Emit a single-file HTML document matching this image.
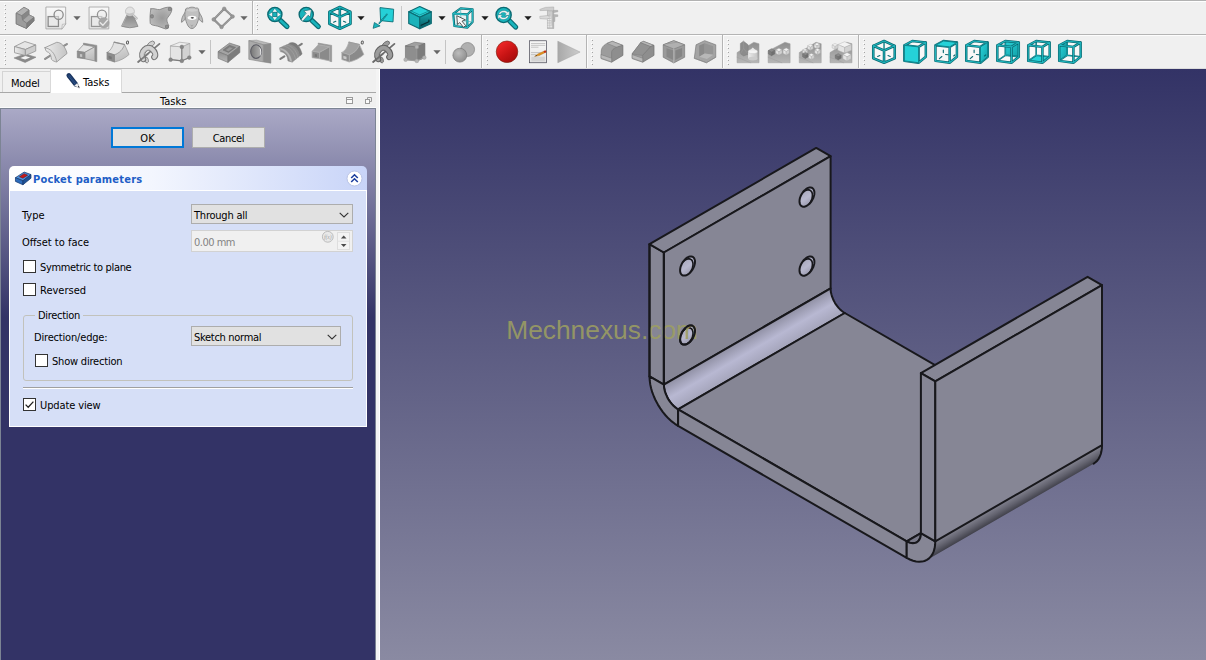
<!DOCTYPE html>
<html><head><meta charset="utf-8"><title>FreeCAD</title>
<style>
*{box-sizing:border-box;margin:0;padding:0}
html,body{width:1206px;height:660px;overflow:hidden;background:#f0f0f0}
body{position:relative;font-family:"DejaVu Sans Condensed","Liberation Sans",sans-serif;font-size:11px;color:#000}
.abs{position:absolute}
#topline{left:0;top:0;width:1206px;height:1px;background:#b2b2b2}
#topline2{left:0;top:1px;width:1206px;height:1px;background:#fff}
.hsep{left:0;width:1206px;height:1px;background:#b4b4b4}
.hsepw{left:0;width:1206px;height:1px;background:#fdfdfd}
.tb{position:absolute;left:0;width:1206px;height:32px}
.tb svg{position:absolute;overflow:visible}
.handle{position:absolute;width:2px;height:27px;background-image:repeating-linear-gradient(to bottom,#fff 0,#fff 1px,transparent 1px,transparent 4px),repeating-linear-gradient(to bottom,transparent 0,transparent 1px,#a4a4a4 1px,#a4a4a4 2px,transparent 2px,transparent 4px);background-size:1px 100%,1px 100%;background-position:0 0,1px 0;background-repeat:no-repeat}
.vsep{position:absolute;width:1px;background:#bdbdbd}
.vsepw{position:absolute;width:1px;background:#fff}
.dd{position:absolute;width:0;height:0;border-left:4px solid transparent;border-right:4px solid transparent;border-top:4px solid #8a8a8a}
.dd.k{border-top-color:#1a1a1a}
#view{left:380px;top:69px;width:826px;height:591px;background:linear-gradient(#333366,#8a8aa2)}
#view svg{position:absolute;left:0;top:0}
#split{left:376px;top:69px;width:4px;height:591px;background:linear-gradient(90deg,#f4f4f4 0,#f4f4f4 3px,#fff 3px)}
#tabs{left:0;top:69px;width:376px;height:24px}
#tabline{left:0;top:92px;width:376px;height:1px;background:#a8a8a8}
#tabM{left:2px;top:71px;width:49px;height:21px;border:1px solid #d4d4d4;border-bottom:none;background:#f0f0f0}
#tabT{left:50px;top:69px;width:72px;height:24px;background:#fff;border:1px solid #d9d9d9;border-bottom:none}
.txt{position:absolute;white-space:nowrap;line-height:14px}
#panel{left:0;top:108px;width:376px;height:552px;background:linear-gradient(#aaa9c6 0px,#333366 208px,#333366 100%);border:1px solid #7c8494;border-bottom:none}
#pwl{left:0;top:107px;width:376px;height:1px;background:#fbfbfb}
.btn{position:absolute;height:21px;width:73px;background:#e1e1e1;border:1px solid #adadad;text-align:center;line-height:19px}
#ok{border:2px solid #0078d7;line-height:17px}
#boxh{left:9px;top:166px;width:358px;height:25px;border-radius:5px 5px 0 0;background:linear-gradient(90deg,#ffffff 0%,#f3f6fe 40%,#c8d4f8 100%);}
#boxb{left:9px;top:190px;width:358px;height:237px;background:#d6dff7;border:1px solid #fff;border-top:1px solid #fff}
.combo{position:absolute;height:20px;background:#e1e1e1;border:1px solid #adadad;line-height:18px;padding-left:2px;padding-top:1.5px}
.cb{position:absolute;width:13px;height:13px;background:#fff;border:1px solid #333}
.lbl{position:absolute;white-space:nowrap;line-height:14px}
</style></head>
<body>
<div class="abs" id="topline"></div><div class="abs" id="topline2"></div>
<div class="tb" style="top:2px"><svg width="1206" height="32" viewBox="0 0 1206 32" style="left:0;top:0"><defs>
<linearGradient id="gA" x1="0" y1="0" x2="0" y2="1"><stop offset="0" stop-color="#f9f9f9"/><stop offset="1" stop-color="#e4e4e4"/></linearGradient>
<linearGradient id="gB" x1="0" y1="0" x2="1" y2="1"><stop offset="0" stop-color="#b4b4b4"/><stop offset="1" stop-color="#8c8c8c"/></linearGradient>
<linearGradient id="gC" x1="0" y1="0" x2="1" y2="0"><stop offset="0" stop-color="#ececec"/><stop offset="1" stop-color="#c4c4c4"/></linearGradient>
<linearGradient id="gD" x1="0" y1="0" x2="0" y2="1"><stop offset="0" stop-color="#8e8e8e"/><stop offset="1" stop-color="#b6b6b6"/></linearGradient>
<linearGradient id="gR" x1="0.2" y1="0.1" x2="0.8" y2="0.9"><stop offset="0" stop-color="#ee2626"/><stop offset="0.55" stop-color="#c81414"/><stop offset="1" stop-color="#a80c0c"/></linearGradient>
<linearGradient id="gT" x1="0" y1="0" x2="1" y2="1"><stop offset="0" stop-color="#2ad4da"/><stop offset="1" stop-color="#12a0a8"/></linearGradient>
<linearGradient id="gT2" x1="0" y1="0" x2="0" y2="1"><stop offset="0" stop-color="#18aab2"/><stop offset="1" stop-color="#0a5860"/></linearGradient>
<linearGradient id="gP" x1="0" y1="0" x2="1" y2="0"><stop offset="0" stop-color="#a8a8a8"/><stop offset="1" stop-color="#cdcdcd"/></linearGradient>
<linearGradient id="gH" x1="0" y1="0" x2="1" y2="0"><stop offset="0" stop-color="#767676"/><stop offset="1" stop-color="#b4b4b4"/></linearGradient>
<linearGradient id="gD2" x1="0" y1="0" x2="0" y2="1"><stop offset="0" stop-color="#848484"/><stop offset="1" stop-color="#b0b0b0"/></linearGradient>
<linearGradient id="gL" x1="0" y1="0" x2="0.3" y2="1"><stop offset="0" stop-color="#dedede"/><stop offset="1" stop-color="#bcbcbc"/></linearGradient>
<radialGradient id="gS" cx="0.4" cy="0.35" r="0.7"><stop offset="0" stop-color="#bcbcbc"/><stop offset="1" stop-color="#8c8c8c"/></radialGradient>
<radialGradient id="gS2" cx="0.55" cy="0.5" r="0.6"><stop offset="0" stop-color="#9a9a9a"/><stop offset="1" stop-color="#bcbcbc"/></radialGradient>
</defs><g transform="translate(8,0) scale(0.09121)"><polygon points="175,58 230,88 230,140 285,168 285,205 203,290 90,240 90,122" fill="#9a9a9a" stroke="#747474" stroke-width="9" stroke-linejoin="round" /><polygon points="175,58 230,88 150,150 90,122" fill="#b2b2b2" stroke="#7c7c7c" stroke-width="6" stroke-linejoin="round" /><polygon points="150,150 230,88 230,140 160,200" fill="#868686" stroke="#7c7c7c" stroke-width="5" stroke-linejoin="round" /><polygon points="160,200 230,140 285,168 205,232" fill="#a8a8a8" stroke="#7c7c7c" stroke-width="5" stroke-linejoin="round" /><polygon points="205,232 285,168 285,205 203,290" fill="#7e7e7e" stroke="#747474" stroke-width="5" stroke-linejoin="round" /><polygon points="90,122 150,150 160,200 205,232 203,290 90,240" fill="#9c9c9c" stroke="#747474" stroke-width="6" stroke-linejoin="round" /><path d="M420,55 H632 V240 L590,295 H420 Z" fill="url(#gA)" stroke="#a2a2a2" stroke-width="9" stroke-linejoin="round" stroke-linecap="round" /><path d="M590,295 L595,245 L632,240 Z" fill="#e8e8e8" stroke="#a4a4a4" stroke-width="6" stroke-linejoin="round" stroke-linecap="round" /><rect x="440" y="160" width="113" height="108" fill="#e9e9e9" stroke="#8a8a8a" stroke-width="14"/><circle cx="555" cy="140" r="50" fill="#ececec" stroke="#8a8a8a" stroke-width="14" fill-opacity="0.55"/><path d="M893,55 H1105 V295 H893 Z" fill="url(#gA)" stroke="#a2a2a2" stroke-width="9" stroke-linejoin="round" stroke-linecap="round" /><rect x="915" y="160" width="113" height="108" fill="#e9e9e9" stroke="#949494" stroke-width="14"/><circle cx="1030" cy="140" r="50" fill="#ececec" stroke="#949494" stroke-width="14" fill-opacity="0.55"/><circle cx="1052" cy="228" r="58" fill="#a6a6a6" stroke="#989898" stroke-width="4" /><path d="M1012,228 L1040,256 L1092,198" fill="none" stroke="#e8e8e8" stroke-width="15" stroke-linejoin="round" stroke-linecap="round" /></g><g transform="translate(118,2) scale(0.07463)"><path d="M128,140 L198,140 L268,300 Q160,338 52,300 Z" fill="url(#gD2)" stroke="#868686" stroke-width="11" stroke-linejoin="round" stroke-linecap="round" /><path d="M205,150 L248,193" fill="none" stroke="#a8a8a8" stroke-width="30" stroke-linejoin="round" stroke-linecap="round" /><path d="M205,150 L248,193" fill="none" stroke="#d8d8d8" stroke-width="16" stroke-linejoin="round" stroke-linecap="round" /><circle cx="160" cy="100" r="60" fill="#e2e2e2" stroke="#b4b4b4" stroke-width="9" /><path d="M110,115 A52,52 0 0 0 212,112 Q160,140 110,115 Z" fill="#c4c4c4" stroke="none" stroke-width="0" stroke-linejoin="round" stroke-linecap="round" /><path d="M440,65 C480,50 520,80 560,75 C600,60 640,40 700,42 L722,60 C725,110 690,150 660,190 C645,215 665,260 680,290 L670,325 L640,335 C590,320 540,295 500,290 C470,285 445,280 432,260 C425,200 430,120 440,65 Z" fill="url(#gS2)" stroke="#868686" stroke-width="12" stroke-linejoin="round" stroke-linecap="round" /><rect x="675" y="48" width="40" height="40" rx="8" fill="#8e8e8e" stroke="#787878" stroke-width="10"/><rect x="436" y="143" width="38" height="44" rx="14" fill="#8e8e8e" stroke="#787878" stroke-width="10"/><rect x="636" y="285" width="40" height="40" rx="8" fill="#8e8e8e" stroke="#787878" stroke-width="10"/><path d="M900,110 C870,150 845,200 850,245 C880,235 905,200 915,160 Z" fill="#bebebe" stroke="#848484" stroke-width="11" stroke-linejoin="round" stroke-linecap="round" /><path d="M1085,110 C1115,150 1140,200 1135,245 C1105,235 1080,200 1070,160 Z" fill="#bebebe" stroke="#848484" stroke-width="11" stroke-linejoin="round" stroke-linecap="round" /><path d="M905,80 C900,55 930,50 945,55 C960,38 1025,38 1040,55 C1060,48 1088,58 1080,80 C1100,130 1085,200 1060,260 C1040,310 1010,330 990,330 C970,330 940,310 922,260 C900,200 885,130 905,80 Z" fill="#c0c0c0" stroke="#848484" stroke-width="11" stroke-linejoin="round" stroke-linecap="round" /><path d="M915,85 C940,60 1045,60 1070,85 C1050,110 935,110 915,85 Z" fill="#cecece" stroke="none" stroke-width="0" stroke-linejoin="round" stroke-linecap="round" /><ellipse cx="992" cy="185" rx="60" ry="29" fill="#fafafa" stroke="none" stroke-width="0" /><ellipse cx="996" cy="185" rx="22" ry="11" fill="#484848" stroke="none" stroke-width="0" /><path d="M975,285 Q990,298 1005,285 M990,297 L990,318" fill="none" stroke="#8a8a8a" stroke-width="6" stroke-linejoin="round" stroke-linecap="round" /></g><g transform="translate(113,0) scale(0.11609)"><polygon points="958,58 1030,125 935,215 868,150" fill="none" stroke="#8a8a8a" stroke-width="19" stroke-linejoin="round" /><polygon points="958,58 1030,125 935,215 868,150" fill="none" stroke="#a8a8a8" stroke-width="6" stroke-linejoin="round" /><circle cx="958" cy="58" r="16" fill="#969696" stroke="#848484" stroke-width="4" /><circle cx="1030" cy="125" r="16" fill="#969696" stroke="#848484" stroke-width="4" /><circle cx="935" cy="215" r="16" fill="#969696" stroke="#848484" stroke-width="4" /><circle cx="868" cy="150" r="16" fill="#969696" stroke="#848484" stroke-width="4" /></g><g transform="translate(250,0) scale(0.12438)"><path d="M245,148 L298,198" fill="none" stroke="#0b6a72" stroke-width="40" stroke-linejoin="round" stroke-linecap="round" /><path d="M245,148 L298,198" fill="none" stroke="#19b4bc" stroke-width="22" stroke-linejoin="round" stroke-linecap="round" /><circle cx="200" cy="100" r="57" fill="#19b4bc" stroke="#0b6a72" stroke-width="11" /><path d="M200,52 L222,82 L178,82 Z M200,148 L222,118 L178,118 Z M152,100 L182,78 L182,122 Z M248,100 L218,78 L218,122 Z" fill="#f2f2f2" stroke="#0d7880" stroke-width="3" stroke-linejoin="round" stroke-linecap="round" /><rect x="184" y="84" width="32" height="32" fill="#19b4bc" stroke="#0b6a72" stroke-width="4"/><path d="M497,148 L550,198" fill="none" stroke="#0b6a72" stroke-width="40" stroke-linejoin="round" stroke-linecap="round" /><path d="M497,148 L550,198" fill="none" stroke="#19b4bc" stroke-width="22" stroke-linejoin="round" stroke-linecap="round" /><circle cx="452" cy="100" r="57" fill="#19b4bc" stroke="#0b6a72" stroke-width="11" /><path d="M412,142 L424,154 L468,106 L484,122 L494,60 L432,72 L450,88 Z" fill="#f2f2f2" stroke="#0d6068" stroke-width="5" stroke-linejoin="round" stroke-linecap="round" /><polygon points="722,40 808,80 808,175 722,215 638,175 638,80" fill="#f6f6f6" stroke="none" stroke-width="0" stroke-linejoin="round" /><path d="M722,40 L808,80 L808,175 L722,215 L638,175 L638,80 Z M638,80 L722,120 L808,80 M722,120 L722,215 M722,40 L722,120" fill="none" stroke="#0b6a72" stroke-width="21" stroke-linejoin="round" stroke-linecap="round" /><path d="M722,40 L808,80 L808,175 L722,215 L638,175 L638,80 Z M638,80 L722,120 L808,80 M722,120 L722,215 M722,40 L722,120" fill="none" stroke="#19b4bc" stroke-width="9" stroke-linejoin="round" stroke-linecap="round" /><path d="M672,163 L690,155 M752,155 L770,163" fill="none" stroke="#0b6a72" stroke-width="9" stroke-linejoin="round" stroke-linecap="round" /><polygon points="1045,45 1155,58 1150,160 1050,150" fill="#25d0d7" stroke="#0b6a72" stroke-width="7" stroke-linejoin="round" /><path d="M1100,100 L1040,170" fill="none" stroke="#0b6a72" stroke-width="13" stroke-linejoin="round" stroke-linecap="round" stroke-dasharray="14 9"/><path d="M1100,100 L1040,170" fill="none" stroke="#27d2d8" stroke-width="5" stroke-linejoin="round" stroke-linecap="round" stroke-dasharray="14 9"/><polygon points="990,212 1000,165 1046,192" fill="#19b4bc" stroke="#0b6a72" stroke-width="6" stroke-linejoin="round" /></g><g transform="translate(400,0) scale(0.14096)"><polygon points="140,32 222,70 140,108 62,70" fill="#27d2d8" stroke="#0b6a72" stroke-width="8" stroke-linejoin="round" /><polygon points="62,70 140,108 140,190 62,152" fill="#1bb2ba" stroke="#0b6a72" stroke-width="8" stroke-linejoin="round" /><polygon points="140,108 222,70 222,152 140,190" fill="url(#gT2)" stroke="#0b6a72" stroke-width="8" stroke-linejoin="round" /><path d="M75,62 L140,92 L210,62" fill="none" stroke="#0e8088" stroke-width="5" stroke-linejoin="round" stroke-linecap="round" /><path d="M150,165 L205,140 L205,128" fill="none" stroke="#062e34" stroke-width="9" stroke-linejoin="round" stroke-linecap="round" /><polygon points="378,82 430,45 515,52 478,88" fill="#f4f4f4" stroke="none" stroke-width="0" stroke-linejoin="round" /><polygon points="378,82 478,88 478,182 385,170" fill="#e4f2f3" stroke="none" stroke-width="0" stroke-linejoin="round" /><polygon points="478,88 515,52 515,142 478,182" fill="#eef6f6" stroke="none" stroke-width="0" stroke-linejoin="round" /><path d="M378,82 L430,45 L515,52 L478,88 Z M378,82 L478,88 L478,182 L385,170 Z M478,88 L515,52 L515,142 L478,182" fill="none" stroke="#0b6a72" stroke-width="15" stroke-linejoin="round" stroke-linecap="round" /><path d="M378,82 L430,45 L515,52 L478,88 Z M378,82 L478,88 L478,182 L385,170 Z M478,88 L515,52 L515,142 L478,182" fill="none" stroke="#25bcc4" stroke-width="7" stroke-linejoin="round" stroke-linecap="round" /><path d="M430,45 L432,130 M432,130 L385,170 M432,130 L515,142" fill="none" stroke="#3ab6bc" stroke-width="5" stroke-linejoin="round" stroke-linecap="round" /><path d="M403,100 L408,160 L424,146 L450,180 L466,168 L440,136 L462,128 Z" fill="#f8f8f8" stroke="#3c3c3c" stroke-width="6" stroke-linejoin="round" stroke-linecap="round" /><path d="M778,135 L820,178" fill="none" stroke="#0b6a72" stroke-width="36" stroke-linejoin="round" stroke-linecap="round" /><path d="M778,135 L820,178" fill="none" stroke="#19b4bc" stroke-width="20" stroke-linejoin="round" stroke-linecap="round" /><circle cx="735" cy="92" r="54" fill="#19b4bc" stroke="#0b6a72" stroke-width="10" /><path d="M700,85 C705,60 745,50 765,72 L775,62 L775,95 L742,95 L754,83 C740,68 715,72 712,88 Z" fill="#f2f2f2" stroke="#0d7880" stroke-width="3" stroke-linejoin="round" stroke-linecap="round" /><path d="M770,100 C765,125 725,135 705,112 L695,122 L695,90 L728,90 L716,102 C730,116 755,112 758,97 Z" fill="#f2f2f2" stroke="#0d7880" stroke-width="3" stroke-linejoin="round" stroke-linecap="round" /></g><g transform="translate(534,2) scale(0.04243)"><rect x="312" y="160" width="156" height="420" fill="#cccccc" stroke="#a4a4a4" stroke-width="12"/><rect x="430" y="165" width="36" height="410" fill="#b4b4b4"/><path d="M145,125 L270,80 L465,70 L465,160 L350,160 L340,150 L150,155 Z" fill="#cecece" stroke="#a2a2a2" stroke-width="12" stroke-linejoin="round" stroke-linecap="round" /><path d="M145,290 L340,270 L340,345 L300,355 L150,345 Z" fill="#dadada" stroke="#a6a6a6" stroke-width="12" stroke-linejoin="round" stroke-linecap="round" /><path d="M465,150 L560,150 L565,182 L465,202 Z M465,250 L560,255 L565,292 L492,302 L492,410 L465,415 Z" fill="#b6b6b6" stroke="#a0a0a0" stroke-width="10" stroke-linejoin="round" stroke-linecap="round" /><path d="M330,310 h60 M330,365 h70 M330,420 h60 M330,475 h70 M330,525 h90" fill="none" stroke="#eeeeee" stroke-width="22" stroke-linejoin="round" stroke-linecap="round" /><path d="M370,250 v300" fill="none" stroke="#b0b0b0" stroke-width="10" stroke-linejoin="round" stroke-linecap="round" /></g></svg><div class="handle" style="left:4px;top:2px"></div><svg width="8" height="5" viewBox="0 0 8 5" style="left:73.4px;top:13.9px"><polygon points="0.4,0.3 7.6,0.3 4,4.3" fill="#666666"/></svg><svg width="8" height="5" viewBox="0 0 8 5" style="left:240.4px;top:13.9px"><polygon points="0.4,0.3 7.6,0.3 4,4.3" fill="#666666"/></svg><div class="vsep" style="left:252px;top:-1px;height:33px;background:#b4b4b4"></div><div class="vsep" style="left:253px;top:-1px;height:33px;background:#fbfbfb"></div><div class="handle" style="left:256px;top:2px"></div><svg width="8" height="5" viewBox="0 0 8 5" style="left:357.4px;top:13.8px"><polygon points="0.4,0.3 7.6,0.3 4,4.3" fill="#1c1c1c"/></svg><div class="vsep" style="left:401px;top:4px;height:24px;background:#c9c9c9"></div><svg width="8" height="5" viewBox="0 0 8 5" style="left:437.5px;top:13.8px"><polygon points="0.4,0.3 7.6,0.3 4,4.3" fill="#1c1c1c"/></svg><svg width="8" height="5" viewBox="0 0 8 5" style="left:480.6px;top:13.8px"><polygon points="0.4,0.3 7.6,0.3 4,4.3" fill="#1c1c1c"/></svg><svg width="8" height="5" viewBox="0 0 8 5" style="left:523.7px;top:13.8px"><polygon points="0.4,0.3 7.6,0.3 4,4.3" fill="#1c1c1c"/></svg></div>
<div class="abs hsep" style="top:34px"></div><div class="abs hsepw" style="top:35px"></div>
<div class="tb" style="top:36px"><svg width="1206" height="32" viewBox="0 0 1206 32" style="left:0;top:0"><g transform="translate(8,0) scale(0.10365)"></g><g transform="translate(10,1) scale(0.05308)"><polygon points="75,395 285,320 490,380 285,480" fill="#8a8a8a" stroke="#7e7e7e" stroke-width="10" stroke-linejoin="round" /><polygon points="195,395 290,360 380,385 285,425" fill="#f4f4f4" stroke="none" stroke-width="0" stroke-linejoin="round" /><polygon points="85,180 280,85 485,150 290,235" fill="#e6e6e6" stroke="#969696" stroke-width="16" stroke-linejoin="round" /><polygon points="85,180 290,235 290,350 85,295" fill="url(#gC)" stroke="#969696" stroke-width="16" stroke-linejoin="round" /><polygon points="290,235 485,150 485,265 290,350" fill="#cdcdcd" stroke="#969696" stroke-width="16" stroke-linejoin="round" /><path d="M1015,165 L1072,132" fill="none" stroke="#828282" stroke-width="38" stroke-linejoin="round" stroke-linecap="round" /><path d="M1015,165 L1072,132" fill="none" stroke="#a4a4a4" stroke-width="12" stroke-linejoin="round" stroke-linecap="round" /><path d="M662,412 L752,355" fill="none" stroke="#828282" stroke-width="38" stroke-linejoin="round" stroke-linecap="round" /><path d="M662,412 L752,355" fill="none" stroke="#a4a4a4" stroke-width="12" stroke-linejoin="round" stroke-linecap="round" /><path d="M660,200 L880,100 C960,100 1040,170 1075,310 L880,470 C860,470 800,450 780,420 C775,340 740,280 700,280 C680,270 665,240 660,200 Z" fill="url(#gC)" stroke="#969696" stroke-width="16" stroke-linejoin="round" stroke-linecap="round" /><path d="M665,205 C760,215 850,300 880,465" fill="none" stroke="#969696" stroke-width="14" stroke-linejoin="round" stroke-linecap="round" /></g><g transform="translate(72,1) scale(0.05308)"><polygon points="215,115 468,158 468,465 430,455 430,185 215,145" fill="#8e8e8e" stroke="#888888" stroke-width="10" stroke-linejoin="round" /><polygon points="100,270 215,145 430,185 240,290" fill="#e4e4e4" stroke="#8a8a8a" stroke-width="14" stroke-linejoin="round" /><polygon points="240,290 430,185 430,450 240,410" fill="url(#gL)" stroke="#8a8a8a" stroke-width="14" stroke-linejoin="round" /><polygon points="100,270 240,290 240,410 100,390" fill="#8e8e8e" stroke="#868686" stroke-width="14" stroke-linejoin="round" /><polygon points="150,318 192,324 192,378 150,372" fill="#c4c4c4" stroke="none" stroke-width="0" stroke-linejoin="round" /><path d="M800,335 C900,300 960,230 990,140 L1075,330 C1000,400 900,450 800,470 Z" fill="url(#gL)" stroke="#989898" stroke-width="14" stroke-linejoin="round" stroke-linecap="round" /><path d="M660,290 C720,270 770,180 790,95 L990,140 C960,230 900,300 800,335 Z" fill="#e2e2e2" stroke="#989898" stroke-width="14" stroke-linejoin="round" stroke-linecap="round" /><polygon points="790,85 995,130 990,152 785,107" fill="#8e8e8e" stroke="none" stroke-width="0" stroke-linejoin="round" /><polygon points="660,290 800,335 800,470 660,425" fill="#8c8c8c" stroke="#848484" stroke-width="14" stroke-linejoin="round" /><polygon points="688,352 748,370 748,422 688,404" fill="#767676" stroke="none" stroke-width="0" stroke-linejoin="round" /><ellipse cx="1045" cy="105" rx="20" ry="29" fill="none" stroke="#5e5e5e" stroke-width="19" transform="rotate(12 1045 105)"/></g><g transform="translate(130,0) scale(0.10365)"><ellipse cx="203" cy="78" rx="38" ry="22" transform="rotate(-35 203 78)" fill="#d2d2d2" stroke="#747474" stroke-width="7"/><ellipse cx="160" cy="232" rx="17" ry="28" transform="rotate(-15 160 232)" fill="#d2d2d2" stroke="#747474" stroke-width="7"/><path d="M80,250 L284,76" fill="none" stroke="#7c7c7c" stroke-width="17" stroke-linejoin="round" stroke-linecap="round" /><path d="M128,224 C90,147 167,86 213,127 C243,152 254,188 233,204" fill="none" stroke="#747474" stroke-width="58" stroke-linejoin="round" stroke-linecap="round" stroke-linecap="butt"/><path d="M128,224 C90,147 167,86 213,127 C243,152 254,188 233,204" fill="none" stroke="#d2d2d2" stroke-width="38" stroke-linejoin="round" stroke-linecap="round" stroke-linecap="butt"/><path d="M140,218 C112,160 165,120 196,138" fill="none" stroke="#b4b4b4" stroke-width="8" stroke-linejoin="round" stroke-linecap="round" /><path d="M80,250 L172,172" fill="none" stroke="#7c7c7c" stroke-width="17" stroke-linejoin="round" stroke-linecap="round" /><polygon points="390,95 500,105 500,240 390,225" fill="#e4e4e4" stroke="#a0a0a0" stroke-width="6" stroke-linejoin="round" /><polygon points="390,95 480,60 578,72 500,105" fill="#eeeeee" stroke="#a0a0a0" stroke-width="6" stroke-linejoin="round" /><polygon points="500,105 578,72 578,210 500,240" fill="#d2d2d2" stroke="#a0a0a0" stroke-width="6" stroke-linejoin="round" /><path d="M500,105 L500,240 M392,228 L500,240 L572,208" fill="none" stroke="#7c7c7c" stroke-width="10" stroke-linejoin="round" stroke-linecap="round" /><circle cx="500" cy="105" r="18" fill="#868686" stroke="#787878" stroke-width="4" /><circle cx="392" cy="228" r="18" fill="#868686" stroke="#787878" stroke-width="4" /><circle cx="500" cy="240" r="18" fill="#868686" stroke="#787878" stroke-width="4" /><circle cx="572" cy="208" r="18" fill="#868686" stroke="#787878" stroke-width="4" /><polygon points="850,150 960,68 1060,100 945,190" fill="#a4a4a4" stroke="#747474" stroke-width="6" stroke-linejoin="round" /><polygon points="898,136 960,90 1018,110 950,158" fill="#7e7e7e" stroke="#6c6c6c" stroke-width="5" stroke-linejoin="round" /><polygon points="925,136 962,108 990,118 950,146" fill="#9a9a9a" stroke="none" stroke-width="0" stroke-linejoin="round" /><polygon points="850,150 945,190 945,255 850,215" fill="url(#gD)" stroke="#747474" stroke-width="6" stroke-linejoin="round" /><polygon points="945,190 1060,100 1060,160 945,255" fill="#7c7c7c" stroke="#747474" stroke-width="6" stroke-linejoin="round" /></g><g transform="translate(240,0) scale(0.10365)"><polygon points="85,45 160,40 298,75 225,85" fill="#b8b8b8" stroke="#8a8a8a" stroke-width="5" stroke-linejoin="round" /><polygon points="225,85 298,75 298,262 225,250" fill="#8c8c8c" stroke="#848484" stroke-width="5" stroke-linejoin="round" /><polygon points="85,45 225,85 225,250 85,225" fill="#aaaaaa" stroke="#868686" stroke-width="6" stroke-linejoin="round" /><ellipse cx="155" cy="150" rx="52" ry="66" fill="url(#gH)" stroke="#5c5c64" stroke-width="10" /><path d="M185,105 C212,130 212,175 188,200 C200,170 200,135 185,105 Z" fill="#f4f4f4" stroke="none" stroke-width="0" stroke-linejoin="round" stroke-linecap="round" /></g><g transform="translate(276,1) scale(0.07962)"><path d="M290,107 L324,86" fill="none" stroke="#7c7c7c" stroke-width="26" stroke-linejoin="round" stroke-linecap="round" /><path d="M55,275 L105,242" fill="none" stroke="#7c7c7c" stroke-width="26" stroke-linejoin="round" stroke-linecap="round" /><path d="M170,75 C235,45 305,110 328,215 L300,238 C280,150 230,100 165,100 Z" fill="#7c7c7c" stroke="#747474" stroke-width="5" stroke-linejoin="round" stroke-linecap="round" /><path d="M50,135 L165,85 C230,95 280,150 300,235 L205,315 L150,300 C150,240 110,190 60,185 Z" fill="#8e8e8e" stroke="#7a7a7a" stroke-width="6" stroke-linejoin="round" stroke-linecap="round" /><path d="M50,135 C120,140 190,210 205,315 L172,305 C165,230 110,170 55,165 Z" fill="#b6b6b6" stroke="#8a8a8a" stroke-width="4" stroke-linejoin="round" stroke-linecap="round" /><path d="M98,114 C168,124 228,190 248,284 M132,99 C200,110 258,170 276,258" fill="none" stroke="#a4a4a4" stroke-width="8" stroke-linejoin="round" stroke-linecap="round" /></g><g transform="translate(306.8,1) scale(0.05308)"><polygon points="215,115 468,158 468,465 430,455 430,185 215,145" fill="#9c9c9c" stroke="#888888" stroke-width="10" stroke-linejoin="round" /><polygon points="100,270 215,145 430,185 240,290" fill="#a2a2a2" stroke="#b0b0b0" stroke-width="14" stroke-linejoin="round" /><polygon points="240,290 430,185 430,450 240,410" fill="#8a8a8a" stroke="#b0b0b0" stroke-width="14" stroke-linejoin="round" /><polygon points="100,270 240,290 240,410 100,390" fill="#8c8c8c" stroke="#b0b0b0" stroke-width="14" stroke-linejoin="round" /><polygon points="150,318 192,324 192,378 150,372" fill="#767676" stroke="none" stroke-width="0" stroke-linejoin="round" /><path d="M800,335 C900,300 960,230 990,140 L1075,330 C1000,400 900,450 800,470 Z" fill="#8a8a8a" stroke="#b0b0b0" stroke-width="14" stroke-linejoin="round" stroke-linecap="round" /><path d="M660,290 C720,270 770,180 790,95 L990,140 C960,230 900,300 800,335 Z" fill="#a2a2a2" stroke="#b0b0b0" stroke-width="14" stroke-linejoin="round" stroke-linecap="round" /><polygon points="790,85 995,130 990,152 785,107" fill="#9c9c9c" stroke="none" stroke-width="0" stroke-linejoin="round" /><polygon points="660,290 800,335 800,470 660,425" fill="#8c8c8c" stroke="#b0b0b0" stroke-width="14" stroke-linejoin="round" /><polygon points="688,352 748,370 748,422 688,404" fill="#cacaca" stroke="none" stroke-width="0" stroke-linejoin="round" /><ellipse cx="1045" cy="105" rx="20" ry="29" fill="none" stroke="#5e5e5e" stroke-width="19" transform="rotate(12 1045 105)"/></g><g transform="translate(365,0) scale(0.10365)"><ellipse cx="203" cy="78" rx="38" ry="22" transform="rotate(-35 203 78)" fill="#9c9c9c" stroke="#606060" stroke-width="7"/><ellipse cx="160" cy="232" rx="17" ry="28" transform="rotate(-15 160 232)" fill="#9c9c9c" stroke="#606060" stroke-width="7"/><path d="M80,250 L284,76" fill="none" stroke="#6c6c6c" stroke-width="17" stroke-linejoin="round" stroke-linecap="round" /><path d="M128,224 C90,147 167,86 213,127 C243,152 254,188 233,204" fill="none" stroke="#606060" stroke-width="58" stroke-linejoin="round" stroke-linecap="round" stroke-linecap="butt"/><path d="M128,224 C90,147 167,86 213,127 C243,152 254,188 233,204" fill="none" stroke="#9c9c9c" stroke-width="38" stroke-linejoin="round" stroke-linecap="round" stroke-linecap="butt"/><path d="M140,218 C112,160 165,120 196,138" fill="none" stroke="#8a8a8a" stroke-width="8" stroke-linejoin="round" stroke-linecap="round" /><path d="M80,250 L172,172" fill="none" stroke="#6c6c6c" stroke-width="17" stroke-linejoin="round" stroke-linecap="round" /><polygon points="390,95 500,105 500,240 390,225" fill="#8e8e8e" stroke="#707070" stroke-width="6" stroke-linejoin="round" /><polygon points="390,95 480,60 578,72 500,105" fill="#a0a0a0" stroke="#707070" stroke-width="6" stroke-linejoin="round" /><polygon points="500,105 578,72 578,210 500,240" fill="#7c7c7c" stroke="#707070" stroke-width="6" stroke-linejoin="round" /><path d="M500,105 L500,240 M392,228 L500,240 L572,208" fill="none" stroke="#9c9c9c" stroke-width="10" stroke-linejoin="round" stroke-linecap="round" /><circle cx="500" cy="105" r="18" fill="#b4b4b4" stroke="#9a9a9a" stroke-width="4" /><circle cx="392" cy="228" r="18" fill="#b4b4b4" stroke="#9a9a9a" stroke-width="4" /><circle cx="500" cy="240" r="18" fill="#b4b4b4" stroke="#9a9a9a" stroke-width="4" /><circle cx="572" cy="208" r="18" fill="#b4b4b4" stroke="#9a9a9a" stroke-width="4" /><circle cx="990" cy="130" r="67" fill="#b0b0b0" stroke="#858585" stroke-width="7" /><circle cx="915" cy="185" r="67" fill="url(#gS)" stroke="#7c7c7c" stroke-width="7" /></g><g transform="translate(478,0) scale(0.10365)"><circle cx="280" cy="152" r="104" fill="url(#gR)" stroke="#7c1c0c" stroke-width="6" /><rect x="496" y="46" width="166" height="212" fill="url(#gA)" stroke="#4c4c58" stroke-width="7"/><path d="M515,72 H645 M515,90 H645 M515,108 H580 M515,160 H600 M515,180 H560" fill="none" stroke="#a8a8a8" stroke-width="6" stroke-linejoin="round" stroke-linecap="round" /><path d="M515,200 H645 V245 H515 Z" fill="#d4d4d4" stroke="none" stroke-width="0" stroke-linejoin="round" stroke-linecap="round" /><path d="M548,196 L580,172 L650,140 L660,154 L592,188 Z" fill="#e0921e" stroke="#9a5a10" stroke-width="3" stroke-linejoin="round" stroke-linecap="round" /><path d="M632,148 L650,140 L660,154 L642,163 Z" fill="#c4281c" stroke="none" stroke-width="0" stroke-linejoin="round" stroke-linecap="round" /><path d="M548,196 L566,183 L572,192 Z" fill="#5c4420" stroke="none" stroke-width="0" stroke-linejoin="round" stroke-linecap="round" /><polygon points="770,50 985,155 770,258" fill="url(#gP)" stroke="#a4a4a4" stroke-width="5" stroke-linejoin="round" /></g><g transform="translate(595,0) scale(0.10365)"><path d="M60,215 L60,150 C60,100 100,70 170,52 L268,90 L268,185 L160,250 Z" fill="#9c9c9c" stroke="#727272" stroke-width="6" stroke-linejoin="round" stroke-linecap="round" /><path d="M170,52 L268,90 L215,112 L120,72 Z" fill="#b6b6b6" stroke="#727272" stroke-width="4" stroke-linejoin="round" stroke-linecap="round" /><path d="M160,250 L160,160 C160,130 190,108 268,90 L268,185 Z" fill="#8e8e8e" stroke="#727272" stroke-width="5" stroke-linejoin="round" stroke-linecap="round" /><path d="M60,180 L160,215 L160,250 L60,215 Z" fill="#b8b8b8" stroke="#727272" stroke-width="4" stroke-linejoin="round" stroke-linecap="round" /><path d="M360,215 L360,170 L440,65 L470,52 L568,90 L568,185 L460,250 Z" fill="#9c9c9c" stroke="#727272" stroke-width="6" stroke-linejoin="round" stroke-linecap="round" /><path d="M470,52 L568,90 L535,102 L440,65 Z" fill="#b6b6b6" stroke="#727272" stroke-width="4" stroke-linejoin="round" stroke-linecap="round" /><path d="M460,250 L460,185 L535,102 L568,90 L568,185 Z" fill="#8e8e8e" stroke="#727272" stroke-width="5" stroke-linejoin="round" stroke-linecap="round" /><path d="M360,180 L460,215 L460,250 L360,215 Z" fill="#b8b8b8" stroke="#727272" stroke-width="4" stroke-linejoin="round" stroke-linecap="round" /><path d="M360,170 L440,65 L535,102 L460,185 Z" fill="#929292" stroke="#727272" stroke-width="4" stroke-linejoin="round" stroke-linecap="round" /><polygon points="760,45 865,85 865,205 760,260 658,205 658,85" fill="#9a9a9a" stroke="#727272" stroke-width="6" stroke-linejoin="round" /><polygon points="658,85 760,45 865,85 760,125" fill="#b0b0b0" stroke="#727272" stroke-width="5" stroke-linejoin="round" /><polygon points="690,118 760,140 760,235 690,200" fill="#888888" stroke="none" stroke-width="0" stroke-linejoin="round" /><polygon points="775,140 840,115 840,195 775,232" fill="#858585" stroke="none" stroke-width="0" stroke-linejoin="round" /><path d="M760,125 L760,260" fill="none" stroke="#c4c4c4" stroke-width="7" stroke-linejoin="round" stroke-linecap="round" /><path d="M700,75 L790,60" fill="none" stroke="#8a8a8a" stroke-width="5" stroke-linejoin="round" stroke-linecap="round" /><polygon points="1058,45 1165,85 1165,205 1075,258 958,215 975,85" fill="#a4a4a4" stroke="#727272" stroke-width="6" stroke-linejoin="round" /><polygon points="1005,92 1058,70 1058,170 1005,200" fill="#8a8a8a" stroke="none" stroke-width="0" stroke-linejoin="round" /><polygon points="1058,70 1140,98 1140,180 1058,170" fill="#959595" stroke="none" stroke-width="0" stroke-linejoin="round" /><polygon points="1005,200 1058,170 1140,180 1080,222" fill="#b8b8b8" stroke="none" stroke-width="0" stroke-linejoin="round" /><path d="M958,215 L1075,258 L1165,205" fill="none" stroke="#8a8a8a" stroke-width="5" stroke-linejoin="round" stroke-linecap="round" /></g><g transform="translate(730,0) scale(0.10365)"><polygon points="68,160 230,60 280,75 280,258 68,258" fill="url(#gD)" stroke="#a0a0a0" stroke-width="5" stroke-linejoin="round" /><path d="M68,205 L200,258" fill="none" stroke="#9c9c9c" stroke-width="5" stroke-linejoin="round" stroke-linecap="round" /><polygon points="100,72 130,50 175,85 175,175 130,192 100,170" fill="#8c8c8c" stroke="#808080" stroke-width="5" stroke-linejoin="round" /><path d="M130,50 L132,120 L100,170 M132,120 L175,175" fill="none" stroke="#a0a0a0" stroke-width="4" stroke-linejoin="round" stroke-linecap="round" /><rect x="175" y="150" width="90" height="68" fill="url(#gC)"/><ellipse cx="220" cy="218" rx="45" ry="18" fill="#cccccc" stroke="none" stroke-width="0" /><ellipse cx="220" cy="150" rx="45" ry="20" fill="#f4f4f4" stroke="#c4c4c4" stroke-width="4" /><polygon points="190,140 220,112 250,140" fill="#e8e8e8" stroke="none" stroke-width="0" stroke-linejoin="round" /><polygon points="368,145 530,60 580,75 580,258 368,258" fill="url(#gD)" stroke="#a0a0a0" stroke-width="5" stroke-linejoin="round" /><path d="M368,205 L500,258" fill="none" stroke="#9c9c9c" stroke-width="5" stroke-linejoin="round" stroke-linecap="round" /><polygon points="370,139 401,122 432,139 401,156" fill="#8c8c8c" stroke="#6e6e6e" stroke-width="4" stroke-linejoin="round" /><polygon points="370,139 401,156 401,190 370,173" fill="#7c7c7c" stroke="#6e6e6e" stroke-width="4" stroke-linejoin="round" /><polygon points="401,156 432,139 432,173 401,190" fill="#707070" stroke="#6e6e6e" stroke-width="4" stroke-linejoin="round" /><polygon points="442,134.5 472,118 502,134.5 472,151" fill="#f2f2f2" stroke="#b0b0b0" stroke-width="4" stroke-linejoin="round" /><polygon points="442,134.5 472,151 472,184 442,167.5" fill="#e4e4e4" stroke="#b0b0b0" stroke-width="4" stroke-linejoin="round" /><polygon points="472,151 502,134.5 502,167.5 472,184" fill="#d2d2d2" stroke="#b0b0b0" stroke-width="4" stroke-linejoin="round" /><polygon points="512,132 542,115 572,132 542,149" fill="#f2f2f2" stroke="#b0b0b0" stroke-width="4" stroke-linejoin="round" /><polygon points="512,132 542,149 542,183 512,166" fill="#e4e4e4" stroke="#b0b0b0" stroke-width="4" stroke-linejoin="round" /><polygon points="542,149 572,132 572,166 542,183" fill="#d2d2d2" stroke="#b0b0b0" stroke-width="4" stroke-linejoin="round" /><polygon points="668,160 830,60 880,75 880,258 668,258" fill="url(#gD)" stroke="#a0a0a0" stroke-width="5" stroke-linejoin="round" /><path d="M668,205 L800,258" fill="none" stroke="#9c9c9c" stroke-width="5" stroke-linejoin="round" stroke-linecap="round" /><polygon points="748,94.5 775,80 802,94.5 775,109" fill="#f2f2f2" stroke="#b0b0b0" stroke-width="4" stroke-linejoin="round" /><polygon points="748,94.5 775,109 775,138 748,123.5" fill="#e4e4e4" stroke="#b0b0b0" stroke-width="4" stroke-linejoin="round" /><polygon points="775,109 802,94.5 802,123.5 775,138" fill="#d2d2d2" stroke="#b0b0b0" stroke-width="4" stroke-linejoin="round" /><polygon points="812,80.5 839,66 866,80.5 839,95" fill="#f2f2f2" stroke="#b0b0b0" stroke-width="4" stroke-linejoin="round" /><polygon points="812,80.5 839,95 839,124 812,109.5" fill="#e4e4e4" stroke="#b0b0b0" stroke-width="4" stroke-linejoin="round" /><polygon points="839,95 866,80.5 866,109.5 839,124" fill="#d2d2d2" stroke="#b0b0b0" stroke-width="4" stroke-linejoin="round" /><polygon points="818,134.5 845,120 872,134.5 845,149" fill="#f2f2f2" stroke="#b0b0b0" stroke-width="4" stroke-linejoin="round" /><polygon points="818,134.5 845,149 845,178 818,163.5" fill="#e4e4e4" stroke="#b0b0b0" stroke-width="4" stroke-linejoin="round" /><polygon points="845,149 872,134.5 872,163.5 845,178" fill="#d2d2d2" stroke="#b0b0b0" stroke-width="4" stroke-linejoin="round" /><polygon points="758,182.5 785,168 812,182.5 785,197" fill="#f2f2f2" stroke="#b0b0b0" stroke-width="4" stroke-linejoin="round" /><polygon points="758,182.5 785,197 785,226 758,211.5" fill="#e4e4e4" stroke="#b0b0b0" stroke-width="4" stroke-linejoin="round" /><polygon points="785,197 812,182.5 812,211.5 785,226" fill="#d2d2d2" stroke="#b0b0b0" stroke-width="4" stroke-linejoin="round" /><polygon points="700,134.5 724,122 748,134.5 724,147" fill="#f2f2f2" stroke="#b0b0b0" stroke-width="4" stroke-linejoin="round" /><polygon points="700,134.5 724,147 724,172 700,159.5" fill="#e4e4e4" stroke="#b0b0b0" stroke-width="4" stroke-linejoin="round" /><polygon points="724,147 748,134.5 748,159.5 724,172" fill="#d2d2d2" stroke="#b0b0b0" stroke-width="4" stroke-linejoin="round" /><polygon points="700,172.5 727,158 754,172.5 727,187" fill="#8c8c8c" stroke="#6e6e6e" stroke-width="4" stroke-linejoin="round" /><polygon points="700,172.5 727,187 727,216 700,201.5" fill="#7c7c7c" stroke="#6e6e6e" stroke-width="4" stroke-linejoin="round" /><polygon points="727,187 754,172.5 754,201.5 727,216" fill="#707070" stroke="#6e6e6e" stroke-width="4" stroke-linejoin="round" /><polygon points="965,160 1127,60 1177,75 1177,258 965,258" fill="url(#gD)" stroke="#a0a0a0" stroke-width="5" stroke-linejoin="round" /><path d="M965,205 L1097,258" fill="none" stroke="#9c9c9c" stroke-width="5" stroke-linejoin="round" stroke-linecap="round" /><polygon points="1040,82.5 1106,55 1172,82.5 1106,110" fill="#f2f2f2" stroke="#b0b0b0" stroke-width="4" stroke-linejoin="round" /><polygon points="1040,82.5 1106,110 1106,165 1040,137.5" fill="#e4e4e4" stroke="#b0b0b0" stroke-width="4" stroke-linejoin="round" /><polygon points="1106,110 1172,82.5 1172,137.5 1106,165" fill="#d2d2d2" stroke="#b0b0b0" stroke-width="4" stroke-linejoin="round" /><polygon points="985,86.5 1013,72 1041,86.5 1013,101" fill="#f2f2f2" stroke="#b0b0b0" stroke-width="4" stroke-linejoin="round" /><polygon points="985,86.5 1013,101 1013,130 985,115.5" fill="#e4e4e4" stroke="#b0b0b0" stroke-width="4" stroke-linejoin="round" /><polygon points="1013,101 1041,86.5 1041,115.5 1013,130" fill="#d2d2d2" stroke="#b0b0b0" stroke-width="4" stroke-linejoin="round" /><polygon points="1090,180 1129,160 1168,180 1129,200" fill="#f2f2f2" stroke="#b0b0b0" stroke-width="4" stroke-linejoin="round" /><polygon points="1090,180 1129,200 1129,240 1090,220" fill="#e4e4e4" stroke="#b0b0b0" stroke-width="4" stroke-linejoin="round" /><polygon points="1129,200 1168,180 1168,220 1129,240" fill="#d2d2d2" stroke="#b0b0b0" stroke-width="4" stroke-linejoin="round" /><polygon points="1015,185 1044,170 1073,185 1044,200" fill="#8c8c8c" stroke="#6e6e6e" stroke-width="4" stroke-linejoin="round" /><polygon points="1015,185 1044,200 1044,230 1015,215" fill="#7c7c7c" stroke="#6e6e6e" stroke-width="4" stroke-linejoin="round" /><polygon points="1044,200 1073,185 1073,215 1044,230" fill="#707070" stroke="#6e6e6e" stroke-width="4" stroke-linejoin="round" /></g><g transform="translate(860,0) scale(0.10365)"><polygon points="232,48 335,95 335,215 232,258 128,215 128,95" fill="#f8f8f8" stroke="none" stroke-width="0" stroke-linejoin="round" /><path d="M232,48 L232,140" fill="none" stroke="#0b6a72" stroke-width="12" stroke-linejoin="round" stroke-linecap="round" /><path d="M232,48 L232,140" fill="none" stroke="#20b8c0" stroke-width="5" stroke-linejoin="round" stroke-linecap="round" /><path d="M232,48 L335,95 L335,215 L232,258 L128,215 L128,95 Z M128,95 L232,140 L335,95 M232,140 L232,258" fill="none" stroke="#0b6a72" stroke-width="25" stroke-linejoin="round" stroke-linecap="round" /><path d="M232,48 L335,95 L335,215 L232,258 L128,215 L128,95 Z M128,95 L232,140 L335,95 M232,140 L232,258" fill="none" stroke="#1fb6be" stroke-width="10" stroke-linejoin="round" stroke-linecap="round" /><path d="M170,198 L192,188 M270,188 L292,198" fill="none" stroke="#0b6a72" stroke-width="10" stroke-linejoin="round" stroke-linecap="round" /><polygon points="428,90 505,48 635,62 635,200 565,258 428,240" fill="#f8f8f8" stroke="none" stroke-width="0" stroke-linejoin="round" /><path d="M428,90 L565,105 L565,258 L428,240 Z M428,90 L505,48 L635,62 L565,105 Z M565,105 L635,62 L635,200 L565,258 Z" fill="none" stroke="#0b6a72" stroke-width="24" stroke-linejoin="round" stroke-linecap="round" /><path d="M428,90 L565,105 L565,258 L428,240 Z M428,90 L505,48 L635,62 L565,105 Z M565,105 L635,62 L635,200 L565,258 Z" fill="none" stroke="#1fb6be" stroke-width="10" stroke-linejoin="round" stroke-linecap="round" /><polygon points="428,90 565,105 565,258 428,240" fill="#25d2d8" stroke="#0b6a72" stroke-width="7" stroke-linejoin="round" /><polygon points="728,90 805,48 935,62 935,200 865,258 728,240" fill="#f8f8f8" stroke="none" stroke-width="0" stroke-linejoin="round" /><path d="M728,90 L865,105 L865,258 L728,240 Z M728,90 L805,48 L935,62 L865,105 Z M865,105 L935,62 L935,200 L865,258 Z" fill="none" stroke="#0b6a72" stroke-width="24" stroke-linejoin="round" stroke-linecap="round" /><path d="M728,90 L865,105 L865,258 L728,240 Z M728,90 L805,48 L935,62 L865,105 Z M865,105 L935,62 L935,200 L865,258 Z" fill="none" stroke="#1fb6be" stroke-width="10" stroke-linejoin="round" stroke-linecap="round" /><polygon points="728,90 805,48 935,62 865,105" fill="#25d2d8" stroke="#0b6a72" stroke-width="7" stroke-linejoin="round" /><path d="M804,136 l0,24 M826,178 l24,3 M790,198 l-24,20 M916,183 l-12,10" fill="none" stroke="#0b6a72" stroke-width="11" stroke-linejoin="round" stroke-linecap="round" /><polygon points="1025,90 1102,48 1232,62 1232,200 1162,258 1025,240" fill="#f8f8f8" stroke="none" stroke-width="0" stroke-linejoin="round" /><path d="M1025,90 L1162,105 L1162,258 L1025,240 Z M1025,90 L1102,48 L1232,62 L1162,105 Z M1162,105 L1232,62 L1232,200 L1162,258 Z" fill="none" stroke="#0b6a72" stroke-width="24" stroke-linejoin="round" stroke-linecap="round" /><path d="M1025,90 L1162,105 L1162,258 L1025,240 Z M1025,90 L1102,48 L1232,62 L1162,105 Z M1162,105 L1232,62 L1232,200 L1162,258 Z" fill="none" stroke="#1fb6be" stroke-width="10" stroke-linejoin="round" stroke-linecap="round" /><polygon points="1162,105 1232,62 1232,200 1162,258" fill="url(#gT)" stroke="#0b6a72" stroke-width="7" stroke-linejoin="round" /><path d="M1101,136 l0,24 M1123,178 l24,3 M1087,198 l-24,20 M1213,183 l-12,10" fill="none" stroke="#0b6a72" stroke-width="11" stroke-linejoin="round" stroke-linecap="round" /><polygon points="1325,90 1402,48 1532,62 1532,200 1462,258 1325,240" fill="#f8f8f8" stroke="none" stroke-width="0" stroke-linejoin="round" /><polygon points="1402,48 1532,62 1532,200 1402,186" fill="url(#gT)" stroke="none" stroke-width="0" stroke-linejoin="round" /><path d="M1402,48 L1402,186 M1402,186 L1325,240 M1402,186 L1532,200" fill="none" stroke="#0b6a72" stroke-width="15" stroke-linejoin="round" stroke-linecap="round" /><path d="M1402,48 L1402,186 M1402,186 L1325,240 M1402,186 L1532,200" fill="none" stroke="#20b8c0" stroke-width="6" stroke-linejoin="round" stroke-linecap="round" /><path d="M1325,90 L1462,105 L1462,258 L1325,240 Z M1325,90 L1402,48 L1532,62 L1462,105 Z M1462,105 L1532,62 L1532,200 L1462,258 Z" fill="none" stroke="#0b6a72" stroke-width="24" stroke-linejoin="round" stroke-linecap="round" /><path d="M1325,90 L1462,105 L1462,258 L1325,240 Z M1325,90 L1402,48 L1532,62 L1462,105 Z M1462,105 L1532,62 L1532,200 L1462,258 Z" fill="none" stroke="#1fb6be" stroke-width="10" stroke-linejoin="round" stroke-linecap="round" /><polygon points="1623,90 1700,48 1830,62 1830,200 1760,258 1623,240" fill="#f8f8f8" stroke="none" stroke-width="0" stroke-linejoin="round" /><polygon points="1623,240 1760,258 1830,200 1700,186" fill="#27d2d8" stroke="none" stroke-width="0" stroke-linejoin="round" /><path d="M1700,48 L1700,186 M1700,186 L1623,240 M1700,186 L1830,200" fill="none" stroke="#0b6a72" stroke-width="15" stroke-linejoin="round" stroke-linecap="round" /><path d="M1700,48 L1700,186 M1700,186 L1623,240 M1700,186 L1830,200" fill="none" stroke="#20b8c0" stroke-width="6" stroke-linejoin="round" stroke-linecap="round" /><path d="M1623,90 L1760,105 L1760,258 L1623,240 Z M1623,90 L1700,48 L1830,62 L1760,105 Z M1760,105 L1830,62 L1830,200 L1760,258 Z" fill="none" stroke="#0b6a72" stroke-width="24" stroke-linejoin="round" stroke-linecap="round" /><path d="M1623,90 L1760,105 L1760,258 L1623,240 Z M1623,90 L1700,48 L1830,62 L1760,105 Z M1760,105 L1830,62 L1830,200 L1760,258 Z" fill="none" stroke="#1fb6be" stroke-width="10" stroke-linejoin="round" stroke-linecap="round" /><polygon points="1922,90 1999,48 2129,62 2129,200 2059,258 1922,240" fill="#f8f8f8" stroke="none" stroke-width="0" stroke-linejoin="round" /><polygon points="1922,90 1999,48 1999,186 1922,240" fill="url(#gT)" stroke="none" stroke-width="0" stroke-linejoin="round" /><path d="M1999,48 L1999,186 M1999,186 L1922,240 M1999,186 L2129,200" fill="none" stroke="#0b6a72" stroke-width="15" stroke-linejoin="round" stroke-linecap="round" /><path d="M1999,48 L1999,186 M1999,186 L1922,240 M1999,186 L2129,200" fill="none" stroke="#20b8c0" stroke-width="6" stroke-linejoin="round" stroke-linecap="round" /><path d="M1922,90 L2059,105 L2059,258 L1922,240 Z M1922,90 L1999,48 L2129,62 L2059,105 Z M2059,105 L2129,62 L2129,200 L2059,258 Z" fill="none" stroke="#0b6a72" stroke-width="24" stroke-linejoin="round" stroke-linecap="round" /><path d="M1922,90 L2059,105 L2059,258 L1922,240 Z M1922,90 L1999,48 L2129,62 L2059,105 Z M2059,105 L2129,62 L2129,200 L2059,258 Z" fill="none" stroke="#1fb6be" stroke-width="10" stroke-linejoin="round" stroke-linecap="round" /></g></svg><div class="handle" style="left:4px;top:3px"></div><svg width="8" height="5" viewBox="0 0 8 5" style="left:197.5px;top:13.9px"><polygon points="0.4,0.3 7.6,0.3 4,4.3" fill="#666666"/></svg><div class="vsep" style="left:210px;top:4px;height:24px;background:#c4c4c4"></div><svg width="8" height="5" viewBox="0 0 8 5" style="left:432.5px;top:13.9px"><polygon points="0.4,0.3 7.6,0.3 4,4.3" fill="#666666"/></svg><div class="vsep" style="left:445px;top:4px;height:24px;background:#c4c4c4"></div><div class="vsep" style="left:481px;top:-1px;height:33px;background:#b4b4b4"></div><div class="vsep" style="left:482px;top:-1px;height:33px;background:#fbfbfb"></div><div class="handle" style="left:486px;top:3px"></div><div class="vsep" style="left:586px;top:-1px;height:33px;background:#b4b4b4"></div><div class="vsep" style="left:587px;top:-1px;height:33px;background:#fbfbfb"></div><div class="handle" style="left:591px;top:3px"></div><div class="vsep" style="left:722px;top:-1px;height:33px;background:#b4b4b4"></div><div class="vsep" style="left:723px;top:-1px;height:33px;background:#fbfbfb"></div><div class="handle" style="left:727px;top:3px"></div><div class="vsep" style="left:858px;top:-1px;height:33px;background:#b4b4b4"></div><div class="vsep" style="left:859px;top:-1px;height:33px;background:#fbfbfb"></div><div class="handle" style="left:863px;top:3px"></div></div>
<div class="abs hsep" style="top:68px;background:linear-gradient(90deg,#b9b9b9 0,#b9b9b9 380px,#dcdcdc 380px)"></div>
<div class="abs" id="view"><svg class="v3d" width="826" height="591" viewBox="380 69 826 591"><defs><linearGradient id="filg" gradientUnits="userSpaceOnUse" x1="663.9" y1="384.7" x2="678.1" y2="409.3"><stop offset="0" stop-color="#9090a4"/><stop offset="0.5" stop-color="#b8b8d2"/><stop offset="1" stop-color="#a4a4ba"/></linearGradient>
<linearGradient id="outg" gradientUnits="userSpaceOnUse" x1="935.3" y1="541.4" x2="941.2" y2="551.7"><stop offset="0" stop-color="#80808d"/><stop offset="0.5" stop-color="#63636f"/><stop offset="1" stop-color="#40404a"/></linearGradient>
<linearGradient id="holeg" gradientUnits="objectBoundingBox" x1="0.2" y1="0.1" x2="0.7" y2="1"><stop offset="0" stop-color="#a4a4b8"/><stop offset="0.5" stop-color="#b8b8ce"/><stop offset="1" stop-color="#9292a6"/></linearGradient>
<linearGradient id="rfil" gradientUnits="objectBoundingBox" x1="0" y1="0" x2="1" y2="0.3"><stop offset="0" stop-color="#6c6c7a"/><stop offset="1" stop-color="#9494a6"/></linearGradient></defs><g stroke-width="2" stroke-linejoin="round" stroke-linecap="round"><polygon points="649.5,376.4 663.9,384.7 663.9,252.5 649.5,244.2" fill="#868695" stroke="#18181c" />
<polygon points="649.5,244.2 663.9,252.5 830.6,156.2 816.2,147.9" fill="#868695" stroke="#18181c" />
<polygon points="663.9,384.7 663.9,252.5 830.6,156.2 830.6,288.4" fill="#868695" stroke="#18181c" />
<clipPath id="hc0"><polygon points="695.0,261.8 694.9,260.3 694.5,259.1 694.0,258.0 693.2,257.2 692.3,256.7 691.2,256.5 690.1,256.5 688.8,256.8 687.5,257.4 686.2,258.3 685.0,259.4 683.8,260.8 682.7,262.2 681.8,263.8 681.1,265.5 680.5,267.1 680.2,268.8 680.1,270.3 680.2,271.8 680.5,273.0 681.1,274.1 681.8,274.9 682.7,275.4 683.8,275.6 685.0,275.6 686.2,275.3 687.5,274.6 688.8,273.8 690.1,272.7 691.2,271.3 692.3,269.9 693.2,268.3 694.0,266.6 694.5,265.0 694.9,263.3"/></clipPath>
<polygon points="695.0,261.8 694.9,260.3 694.5,259.1 694.0,258.0 693.2,257.2 692.3,256.7 691.2,256.5 690.1,256.5 688.8,256.8 687.5,257.4 686.2,258.3 685.0,259.4 683.8,260.8 682.7,262.2 681.8,263.8 681.1,265.5 680.5,267.1 680.2,268.8 680.1,270.3 680.2,271.8 680.5,273.0 681.1,274.1 681.8,274.9 682.7,275.4 683.8,275.6 685.0,275.6 686.2,275.3 687.5,274.6 688.8,273.8 690.1,272.7 691.2,271.3 692.3,269.9 693.2,268.3 694.0,266.6 694.5,265.0 694.9,263.3" fill="url(#holeg)" stroke="none"/>
<polygon points="693.0,264.1 692.9,262.7 692.5,261.5 692.0,260.4 691.2,259.6 690.3,259.1 689.3,258.9 688.1,258.9 686.8,259.2 685.5,259.9 684.2,260.7 683.0,261.8 681.8,263.2 680.7,264.6 679.8,266.2 679.1,267.9 678.5,269.5 678.2,271.2 678.1,272.8 678.2,274.2 678.5,275.4 679.1,276.5 679.8,277.3 680.7,277.8 681.8,278.0 683.0,278.0 684.2,277.7 685.5,277.0 686.8,276.2 688.1,275.1 689.3,273.7 690.3,272.3 691.2,270.7 692.0,269.0 692.5,267.4 692.9,265.7" fill="none" stroke="#18181c" stroke-width="1.6" clip-path="url(#hc0)"/>
<polygon points="695.0,261.8 694.9,260.3 694.5,259.1 694.0,258.0 693.2,257.2 692.3,256.7 691.2,256.5 690.1,256.5 688.8,256.8 687.5,257.4 686.2,258.3 685.0,259.4 683.8,260.8 682.7,262.2 681.8,263.8 681.1,265.5 680.5,267.1 680.2,268.8 680.1,270.3 680.2,271.8 680.5,273.0 681.1,274.1 681.8,274.9 682.7,275.4 683.8,275.6 685.0,275.6 686.2,275.3 687.5,274.6 688.8,273.8 690.1,272.7 691.2,271.3 692.3,269.9 693.2,268.3 694.0,266.6 694.5,265.0 694.9,263.3" fill="none" stroke="#18181c"/>
<clipPath id="hc1"><polygon points="814.4,192.8 814.3,191.4 813.9,190.1 813.4,189.1 812.6,188.3 811.7,187.7 810.7,187.5 809.5,187.5 808.2,187.9 806.9,188.5 805.7,189.4 804.4,190.5 803.2,191.8 802.2,193.3 801.2,194.9 800.5,196.5 799.9,198.2 799.6,199.8 799.5,201.4 799.6,202.8 799.9,204.1 800.5,205.1 801.2,205.9 802.2,206.5 803.2,206.7 804.4,206.7 805.7,206.3 806.9,205.7 808.2,204.8 809.5,203.7 810.7,202.4 811.7,200.9 812.6,199.3 813.4,197.7 813.9,196.0 814.3,194.4"/></clipPath>
<polygon points="814.4,192.8 814.3,191.4 813.9,190.1 813.4,189.1 812.6,188.3 811.7,187.7 810.7,187.5 809.5,187.5 808.2,187.9 806.9,188.5 805.7,189.4 804.4,190.5 803.2,191.8 802.2,193.3 801.2,194.9 800.5,196.5 799.9,198.2 799.6,199.8 799.5,201.4 799.6,202.8 799.9,204.1 800.5,205.1 801.2,205.9 802.2,206.5 803.2,206.7 804.4,206.7 805.7,206.3 806.9,205.7 808.2,204.8 809.5,203.7 810.7,202.4 811.7,200.9 812.6,199.3 813.4,197.7 813.9,196.0 814.3,194.4" fill="url(#holeg)" stroke="none"/>
<polygon points="812.4,195.2 812.3,193.8 812.0,192.5 811.4,191.5 810.7,190.7 809.7,190.1 808.7,189.9 807.5,189.9 806.2,190.3 805.0,190.9 803.7,191.8 802.4,192.9 801.2,194.2 800.2,195.7 799.2,197.3 798.5,198.9 798.0,200.6 797.6,202.2 797.5,203.8 797.6,205.2 798.0,206.5 798.5,207.5 799.2,208.3 800.2,208.9 801.2,209.1 802.4,209.1 803.7,208.7 805.0,208.1 806.2,207.2 807.5,206.1 808.7,204.8 809.7,203.3 810.7,201.7 811.4,200.1 812.0,198.4 812.3,196.8" fill="none" stroke="#18181c" stroke-width="1.6" clip-path="url(#hc1)"/>
<polygon points="814.4,192.8 814.3,191.4 813.9,190.1 813.4,189.1 812.6,188.3 811.7,187.7 810.7,187.5 809.5,187.5 808.2,187.9 806.9,188.5 805.7,189.4 804.4,190.5 803.2,191.8 802.2,193.3 801.2,194.9 800.5,196.5 799.9,198.2 799.6,199.8 799.5,201.4 799.6,202.8 799.9,204.1 800.5,205.1 801.2,205.9 802.2,206.5 803.2,206.7 804.4,206.7 805.7,206.3 806.9,205.7 808.2,204.8 809.5,203.7 810.7,202.4 811.7,200.9 812.6,199.3 813.4,197.7 813.9,196.0 814.3,194.4" fill="none" stroke="#18181c"/>
<clipPath id="hc2"><polygon points="814.4,261.8 814.3,260.4 813.9,259.1 813.4,258.1 812.6,257.3 811.7,256.7 810.7,256.5 809.5,256.5 808.2,256.9 806.9,257.5 805.7,258.4 804.4,259.5 803.2,260.8 802.2,262.3 801.2,263.9 800.5,265.5 799.9,267.2 799.6,268.8 799.5,270.4 799.6,271.8 799.9,273.1 800.5,274.1 801.2,274.9 802.2,275.5 803.2,275.7 804.4,275.7 805.7,275.3 806.9,274.7 808.2,273.8 809.5,272.7 810.7,271.4 811.7,269.9 812.6,268.3 813.4,266.7 813.9,265.0 814.3,263.4"/></clipPath>
<polygon points="814.4,261.8 814.3,260.4 813.9,259.1 813.4,258.1 812.6,257.3 811.7,256.7 810.7,256.5 809.5,256.5 808.2,256.9 806.9,257.5 805.7,258.4 804.4,259.5 803.2,260.8 802.2,262.3 801.2,263.9 800.5,265.5 799.9,267.2 799.6,268.8 799.5,270.4 799.6,271.8 799.9,273.1 800.5,274.1 801.2,274.9 802.2,275.5 803.2,275.7 804.4,275.7 805.7,275.3 806.9,274.7 808.2,273.8 809.5,272.7 810.7,271.4 811.7,269.9 812.6,268.3 813.4,266.7 813.9,265.0 814.3,263.4" fill="url(#holeg)" stroke="none"/>
<polygon points="812.4,264.2 812.3,262.8 812.0,261.5 811.4,260.5 810.7,259.7 809.7,259.1 808.7,258.9 807.5,258.9 806.2,259.3 805.0,259.9 803.7,260.8 802.4,261.9 801.2,263.2 800.2,264.7 799.2,266.3 798.5,267.9 798.0,269.6 797.6,271.2 797.5,272.8 797.6,274.2 798.0,275.5 798.5,276.5 799.2,277.3 800.2,277.9 801.2,278.1 802.4,278.1 803.7,277.7 805.0,277.1 806.2,276.2 807.5,275.1 808.7,273.8 809.7,272.3 810.7,270.7 811.4,269.1 812.0,267.4 812.3,265.8" fill="none" stroke="#18181c" stroke-width="1.6" clip-path="url(#hc2)"/>
<polygon points="814.4,261.8 814.3,260.4 813.9,259.1 813.4,258.1 812.6,257.3 811.7,256.7 810.7,256.5 809.5,256.5 808.2,256.9 806.9,257.5 805.7,258.4 804.4,259.5 803.2,260.8 802.2,262.3 801.2,263.9 800.5,265.5 799.9,267.2 799.6,268.8 799.5,270.4 799.6,271.8 799.9,273.1 800.5,274.1 801.2,274.9 802.2,275.5 803.2,275.7 804.4,275.7 805.7,275.3 806.9,274.7 808.2,273.8 809.5,272.7 810.7,271.4 811.7,269.9 812.6,268.3 813.4,266.7 813.9,265.0 814.3,263.4" fill="none" stroke="#18181c"/>
<clipPath id="hc3"><polygon points="695.0,330.8 694.9,329.3 694.5,328.1 694.0,327.0 693.2,326.2 692.3,325.7 691.2,325.5 690.1,325.5 688.8,325.8 687.5,326.4 686.2,327.3 685.0,328.4 683.8,329.8 682.7,331.2 681.8,332.8 681.1,334.5 680.5,336.1 680.2,337.8 680.1,339.3 680.2,340.8 680.5,342.0 681.1,343.1 681.8,343.9 682.7,344.4 683.8,344.6 685.0,344.6 686.2,344.3 687.5,343.6 688.8,342.8 690.1,341.7 691.2,340.3 692.3,338.9 693.2,337.3 694.0,335.6 694.5,334.0 694.9,332.3"/></clipPath>
<polygon points="695.0,330.8 694.9,329.3 694.5,328.1 694.0,327.0 693.2,326.2 692.3,325.7 691.2,325.5 690.1,325.5 688.8,325.8 687.5,326.4 686.2,327.3 685.0,328.4 683.8,329.8 682.7,331.2 681.8,332.8 681.1,334.5 680.5,336.1 680.2,337.8 680.1,339.3 680.2,340.8 680.5,342.0 681.1,343.1 681.8,343.9 682.7,344.4 683.8,344.6 685.0,344.6 686.2,344.3 687.5,343.6 688.8,342.8 690.1,341.7 691.2,340.3 692.3,338.9 693.2,337.3 694.0,335.6 694.5,334.0 694.9,332.3" fill="url(#holeg)" stroke="none"/>
<polygon points="693.0,333.1 692.9,331.7 692.5,330.5 692.0,329.4 691.2,328.6 690.3,328.1 689.3,327.9 688.1,327.9 686.8,328.2 685.5,328.9 684.2,329.7 683.0,330.8 681.8,332.2 680.7,333.6 679.8,335.2 679.1,336.9 678.5,338.5 678.2,340.2 678.1,341.8 678.2,343.2 678.5,344.4 679.1,345.5 679.8,346.3 680.7,346.8 681.8,347.0 683.0,347.0 684.2,346.7 685.5,346.1 686.8,345.2 688.1,344.1 689.3,342.7 690.3,341.3 691.2,339.7 692.0,338.0 692.5,336.4 692.9,334.7" fill="none" stroke="#18181c" stroke-width="1.6" clip-path="url(#hc3)"/>
<polygon points="695.0,330.8 694.9,329.3 694.5,328.1 694.0,327.0 693.2,326.2 692.3,325.7 691.2,325.5 690.1,325.5 688.8,325.8 687.5,326.4 686.2,327.3 685.0,328.4 683.8,329.8 682.7,331.2 681.8,332.8 681.1,334.5 680.5,336.1 680.2,337.8 680.1,339.3 680.2,340.8 680.5,342.0 681.1,343.1 681.8,343.9 682.7,344.4 683.8,344.6 685.0,344.6 686.2,344.3 687.5,343.6 688.8,342.8 690.1,341.7 691.2,340.3 692.3,338.9 693.2,337.3 694.0,335.6 694.5,334.0 694.9,332.3" fill="none" stroke="#18181c"/>
<polygon points="663.9,384.7 664.0,386.6 664.2,388.6 664.7,390.6 665.3,392.6 666.1,394.7 667.0,396.7 668.0,398.7 669.2,400.6 670.5,402.4 671.9,404.1 673.4,405.7 674.9,407.1 676.5,408.3 678.1,409.3 844.8,313.0 843.2,312.0 841.6,310.8 840.1,309.4 838.6,307.9 837.2,306.2 835.9,304.4 834.7,302.4 833.7,300.5 832.8,298.4 832.0,296.4 831.4,294.3 830.9,292.3 830.7,290.3 830.6,288.4" fill="url(#filg)" stroke="#18181c"/>
<polygon points="649.5,376.4 649.7,380.2 650.2,384.2 651.1,388.2 652.3,392.4 653.9,396.5 655.7,400.6 657.9,404.6 660.3,408.4 662.9,412.1 665.7,415.5 668.6,418.6 671.7,421.4 674.9,423.8 678.1,425.9 678.1,409.3 676.5,408.3 674.9,407.1 673.4,405.7 671.9,404.1 670.5,402.4 669.2,400.6 668.0,398.7 667.0,396.7 666.1,394.7 665.3,392.6 664.7,390.6 664.2,388.6 664.0,386.6 663.9,384.7" fill="#868695" stroke="#18181c" />
<polygon points="678.1,409.3 906.7,541.3 1073.4,445.0 844.8,313.0" fill="#868695" stroke="#18181c" />
<polygon points="678.1,425.9 906.7,557.9 906.7,541.3 678.1,409.3" fill="#868695" stroke="#18181c" />
<polygon points="906.7,541.3 908.3,542.1 909.9,542.7 911.4,543.1 912.9,543.2 914.3,543.1 915.6,542.8 916.8,542.3 917.8,541.5 918.7,540.6 919.5,539.4 920.1,538.1 920.6,536.5 920.8,534.9 920.9,533.1 1087.6,436.8 1087.5,438.6 1087.3,440.3 1086.8,441.8 1086.2,443.2 1085.4,444.3 1084.5,445.3 1083.5,446.0 1082.3,446.6 1081.0,446.9 1079.6,447.0 1078.1,446.8 1076.6,446.5 1075.0,445.9 1073.4,445.0" fill="url(#rfil)" stroke="#18181c"/>
<polygon points="926.9,559.9 928.8,558.6 930.5,557.0 931.9,555.0 933.1,552.8 934.1,550.3 934.7,547.5 935.2,544.6 935.3,541.4 1102.0,445.1 1101.9,448.3 1101.4,451.3 1100.8,454.0 1099.8,456.5 1098.6,458.8 1097.2,460.7 1095.5,462.3 1093.6,463.7" fill="url(#outg)" stroke="none"/>
<polyline points="1093.6,463.7 1095.5,462.3 1097.2,460.7 1098.6,458.8 1099.8,456.5 1100.8,454.0 1101.4,451.3 1101.9,448.3 1102.0,445.1" fill="none" stroke="#18181c" />
<polygon points="906.7,557.9 909.9,559.5 913.1,560.7 916.1,561.5 919.1,561.8 921.9,561.6 924.5,561.0 926.9,559.9 929.1,558.4 930.9,556.4 932.5,554.1 933.7,551.4 934.6,548.3 935.1,545.0 935.3,541.4 920.9,533.1 920.8,534.9 920.6,536.5 920.1,538.1 919.5,539.4 918.7,540.6 917.8,541.5 916.8,542.3 915.6,542.8 914.3,543.1 912.9,543.2 911.4,543.1 909.9,542.7 908.3,542.1 906.7,541.3" fill="#868695" stroke="#18181c" />
<polygon points="920.9,373.1 935.3,381.4 1102.0,285.1 1087.6,276.8" fill="#868695" stroke="#18181c" />
<polygon points="920.9,533.1 935.3,541.4 935.3,381.4 920.9,373.1" fill="#868695" stroke="#18181c" />
<polygon points="935.3,541.4 935.3,381.4 1102.0,285.1 1102.0,445.1" fill="#868695" stroke="#18181c" /></g><text x="506.2" y="339" font-family="Liberation Sans, Arial, sans-serif" font-size="26.35" fill="#9c9e62" fill-opacity="0.9">Mechnexus.com</text><g stroke-width="2" stroke-linecap="round" fill="none"><polyline points="649.5,376.4 649.5,244.2" fill="none" stroke="#18181c" /><polyline points="663.9,384.7 663.9,252.5" fill="none" stroke="#18181c" /><polygon points="695.0,330.8 694.9,329.3 694.5,328.1 694.0,327.0 693.2,326.2 692.3,325.7 691.2,325.5 690.1,325.5 688.8,325.8 687.5,326.4 686.2,327.3 685.0,328.4 683.8,329.8 682.7,331.2 681.8,332.8 681.1,334.5 680.5,336.1 680.2,337.8 680.1,339.3 680.2,340.8 680.5,342.0 681.1,343.1 681.8,343.9 682.7,344.4 683.8,344.6 685.0,344.6 686.2,344.3 687.5,343.6 688.8,342.8 690.1,341.7 691.2,340.3 692.3,338.9 693.2,337.3 694.0,335.6 694.5,334.0 694.9,332.3" fill="none" stroke="#18181c"/></g></svg></div>
<div class="abs" id="split"></div>

<div class="abs" id="tabline"></div>
<div class="abs" id="tabM"></div>
<div class="abs" id="tabT"></div>
<div class="txt" style="left:11px;top:77px;letter-spacing:-0.25px">Model</div>
<svg class="abs" style="left:50px;top:68px;overflow:visible" width="40" height="26"><g transform="translate(0,0) scale(0.06633)"><path d="M284,113 L388,245" fill="none" stroke="#1a3560" stroke-width="72" stroke-linejoin="round" stroke-linecap="round" stroke-linecap="butt"/><path d="M278,118 L382,250" fill="none" stroke="#3c6cac" stroke-width="9" stroke-linejoin="round" stroke-linecap="round" stroke-linecap="butt"/><path d="M292,107 L396,239" fill="none" stroke="#2f5a98" stroke-width="9" stroke-linejoin="round" stroke-linecap="round" stroke-linecap="butt"/><polygon points="364,266 414,226 442,302" fill="#f4f4f4" stroke="#50586a" stroke-width="5" stroke-linejoin="round" /><polygon points="420,276 437,268 444,304" fill="#1c1c24" stroke="none" stroke-width="0" stroke-linejoin="round" /></g></svg>
<div class="txt" style="left:83px;top:76px">Tasks</div>
<div class="txt" style="left:160px;top:95px">Tasks</div>
<svg class="abs" style="left:345px;top:96px" width="30" height="10" viewBox="0 0 30 10"><g fill="none" stroke="#9a9a9a" stroke-width="1"><rect x="1.5" y="1.5" width="6" height="6" fill="#fafafa"/><path d="M1.5 3.5h6"/><path d="M22.5 3.5v-2h4v4h-2"/><rect x="20.5" y="3.5" width="4" height="4" fill="#fafafa"/></g></svg>
<div class="abs" id="pwl"></div><div class="abs" id="panel"></div>
<div class="btn" id="ok" style="left:111px;top:127px;padding-top:1px">OK</div>
<div class="btn" style="left:192px;top:127px;padding-top:1px;letter-spacing:-0.35px">Cancel</div>
<div class="abs" id="boxh"></div>
<div class="abs" id="boxb"></div>
<svg class="abs" style="left:8px;top:164px;overflow:visible" width="30" height="30"><g transform="translate(0,0) scale(0.12438)"><polygon points="60,110 130,65 185,85 120,135" fill="#4c92dc" stroke="#183a70" stroke-width="6" stroke-linejoin="round" /><polygon points="92,102 130,78 158,90 120,114" fill="#c41a1a" stroke="#6a1010" stroke-width="4" stroke-linejoin="round" /><polygon points="60,110 120,135 120,167 60,140" fill="#2c6cbc" stroke="#183a70" stroke-width="6" stroke-linejoin="round" /><polygon points="120,135 185,85 185,114 120,167" fill="#1e5296" stroke="#183a70" stroke-width="6" stroke-linejoin="round" /></g></svg>
<div class="txt" style="left:33px;top:172.6px;font-size:11px;letter-spacing:0.22px;font-weight:bold;color:#215dc6">Pocket parameters</div>
<svg class="abs" style="left:346px;top:170px" width="17" height="17" viewBox="0 0 17 17"><circle cx="8.5" cy="8.5" r="7.5" fill="#fff" stroke="#b9c4e6" stroke-width="1"/><path d="M5.2 8 L8.5 4.8 L11.8 8 M5.2 12 L8.5 8.8 L11.8 12" fill="none" stroke="#1d3f9e" stroke-width="1.6"/></svg>
<div class="lbl" style="left:22px;top:209px">Type</div>
<div class="combo" style="left:191px;top:204px;width:162px;letter-spacing:-0.22px">Through all</div><svg class="abs" style="left:339px;top:212px" width="10" height="6" viewBox="0 0 10 6"><path d="M0.7 0.8 L5 5 L9.3 0.8" fill="none" stroke="#333" stroke-width="1.1"/></svg>
<div class="lbl" style="left:22px;top:236px">Offset to face</div>
<div class="combo" style="left:191px;top:230px;width:162px;height:22px;background:#f0f0f0;border-color:#d2d2d2;color:#838383;line-height:19px;letter-spacing:-0.5px;padding-top:2px">0.00 mm</div>
<svg class="abs" style="left:320px;top:230px" width="32" height="22" viewBox="0 0 32 22"><circle cx="7.8" cy="6.8" r="5.4" fill="#e9e9e9" stroke="#bcbcbc" stroke-width="1"/><text x="7.8" y="8.8" font-size="5.6" font-style="italic" text-anchor="middle" fill="#a4a4a4" font-family="Liberation Serif, serif">f(x)</text><rect x="17.5" y="2.5" width="12" height="17" fill="#f3f3f3" stroke="#dedede"/><path d="M17.5 11.2h12" stroke="#e2e2e2" fill="none"/><path d="M20.9 8.4 L23.7 5.4 L26.5 8.4Z M20.9 14.1 L23.7 17.1 L26.5 14.1Z" fill="#4a4a4a"/></svg>
<div class="cb" style="left:23px;top:260px"></div><div class="lbl" style="left:40px;top:261px;letter-spacing:-0.33px">Symmetric to plane</div>
<div class="cb" style="left:23px;top:283px"></div><div class="lbl" style="left:40px;top:284px">Reversed</div>
<div class="abs" style="left:23px;top:315px;width:330px;height:66px;border:1px solid #c2c2bc;border-radius:3px"></div>
<div class="lbl" style="left:35px;top:309px;background:#d6dff7;padding:0 3px;letter-spacing:-0.3px">Direction</div>
<div class="lbl" style="left:34px;top:331px;letter-spacing:-0.18px">Direction/edge:</div>
<div class="combo" style="left:191px;top:326px;width:150px;letter-spacing:-0.3px">Sketch normal</div><svg class="abs" style="left:327px;top:334px" width="10" height="6" viewBox="0 0 10 6"><path d="M0.7 0.8 L5 5 L9.3 0.8" fill="none" stroke="#333" stroke-width="1.1"/></svg>
<div class="cb" style="left:35px;top:354px"></div><div class="lbl" style="left:52px;top:355px;letter-spacing:-0.2px">Show direction</div>
<div class="abs" style="left:23px;top:387px;width:330px;height:1px;background:#a0a0a0"></div>
<div class="abs" style="left:23px;top:388px;width:330px;height:1px;background:#fff"></div>
<div class="cb" style="left:23px;top:398px"></div>
<svg class="abs" style="left:23px;top:398px" width="13" height="13" viewBox="0 0 13 13"><path d="M2.6 6.6 L5.2 9.2 L10.4 3.6" fill="none" stroke="#222" stroke-width="1.3"/></svg>
<div class="lbl" style="left:40px;top:399px;letter-spacing:-0.12px">Update view</div>

</body></html>
